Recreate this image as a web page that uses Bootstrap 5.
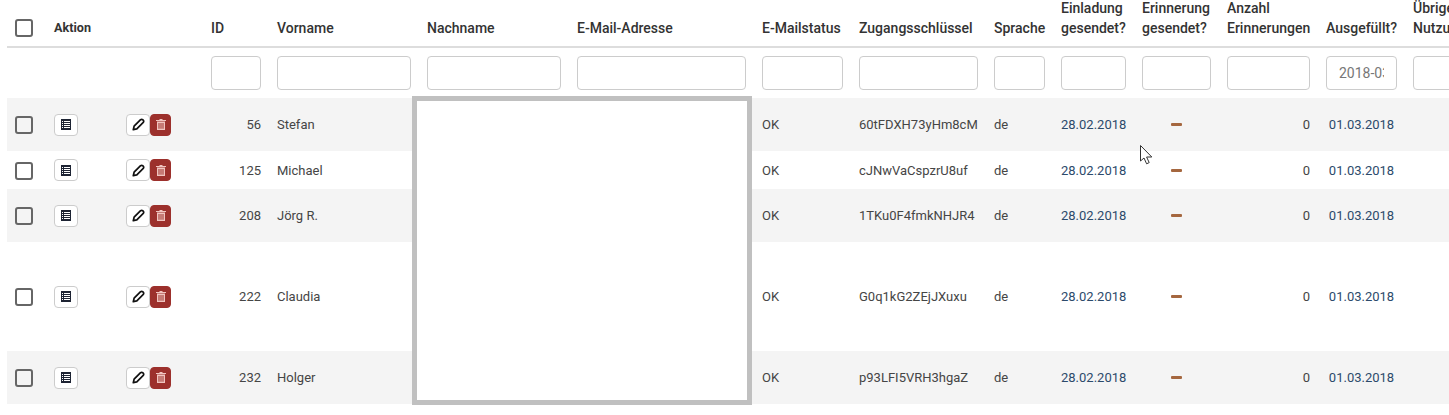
<!DOCTYPE html>
<html lang="de">

<head>
    <meta charset="UTF-8">
    <meta name="viewport" content="width=device-width, initial-scale=1.0">
    <title>Teilnehmer</title>
    <link href="https://cdn.jsdelivr.net/npm/bootstrap@5.3.0/dist/css/bootstrap.min.css" rel="stylesheet">
    <style>
        html, body {
            height: 415px;
            overflow: hidden;
        }

        body {
            font-family: Roboto, sans-serif;
            font-size: 13px;
            line-height: 20px;
            color: #454545;
            background: #fff;
        }

        .page-wrap {
            position: relative;
            width: 1449px;
            height: 415px;
            padding-left: 7px;
            overflow: hidden;
        }

        .survey-table {
            table-layout: fixed;
            width: 1498px;
            margin: -2px 0 0;
            --bs-table-striped-bg: #f4f4f4;
            --bs-table-striped-color: #454545;
            --bs-table-color: #454545;
        }

        .survey-table th,
        .survey-table td {
            padding: 8px;
            border: 0;
            vertical-align: middle;
        }

        .survey-table thead tr:first-child th {
            vertical-align: bottom;
            font-size: 14px;
            font-weight: 500;
            color: #333;
            padding-top: 0;
            padding-bottom: 8px;
            border-bottom: 2px solid #ddd;
        }

        .survey-table thead tr:first-child th.small-head {
            font-size: 12.6px;
            font-weight: 700;
        }

        .survey-table thead .tick-box {
            margin-bottom: 1px;
        }

        .filter-row td {
            height: 50px;
        }

        .filter-input {
            height: 34px;
            padding: 6px 12px;
            font-size: 14px;
            color: #777;
            border-color: #ccc;
            border-radius: 4px;
        }

        .row-a { height: 53px; }
        .row-b { height: 38px; }
        .row-c { height: 109px; }

        /* text of the short row sits a pixel lower than its buttons */
        .survey-table .row-b td:not(.action-cell) {
            padding-top: 9px;
            padding-bottom: 7px;
        }

        .tick-box {
            display: block;
            width: 18px;
            height: 18px;
            border: 2px solid #666;
            border-radius: 3px;
            background: transparent;
        }

        .action-wrap {
            display: flex;
            align-items: center;
        }

        .act-btn {
            display: inline-flex;
            align-items: center;
            justify-content: center;
            height: 22px;
            padding: 0;
            border-radius: 4px;
            border: 1px solid #ccc;
            background: #fff;
        }

        .btn-view { width: 24px; margin-right: 48px; }
        .btn-edit { width: 24px; }
        .btn-del { width: 21px; background: #9c302c; border-color: #9c302c; }

        .date-text { color: #2c4a6b; }

        .dash-mark {
            display: block;
            width: 11px;
            height: 3px;
            margin: 0 auto 1px;
            border-radius: 1px;
            background: #a5673f;
        }

        .blank-box {
            position: absolute;
            left: 412px;
            top: 96px;
            width: 340px;
            height: 309px;
            background: #fff;
            border: 5px solid #c0c0c0;
        }

        .mouse-arrow {
            position: absolute;
            left: 1140px;
            top: 145px;
        }
    </style>
</head>

<body>
    <div class="page-wrap">
        <table class="table table-striped survey-table">
            <colgroup>
                <col style="width:39px"><col style="width:157px"><col style="width:66px"><col style="width:150px">
                <col style="width:150px"><col style="width:185px"><col style="width:97px"><col style="width:135px">
                <col style="width:67px"><col style="width:81px"><col style="width:85px"><col style="width:99px">
                <col style="width:87px"><col style="width:100px">
            </colgroup>
            <thead>
                <tr>
                    <th><span class="tick-box"></span></th>
                    <th class="small-head">Aktion</th>
                    <th>ID</th>
                    <th>Vorname</th>
                    <th>Nachname</th>
                    <th>E-Mail-Adresse</th>
                    <th>E-Mailstatus</th>
                    <th>Zugangsschlüssel</th>
                    <th>Sprache</th>
                    <th>Einladung gesendet?</th>
                    <th>Erinnerung gesendet?</th>
                    <th>Anzahl Erinnerungen</th>
                    <th>Ausgefüllt?</th>
                    <th>Übrige Nutzungen</th>
                </tr>
                <tr class="filter-row" id="filter-row"></tr>
            </thead>
            <tbody id="rows"></tbody>
        </table>
        <div class="blank-box"></div>
        <svg class="mouse-arrow" width="14" height="20" viewBox="0 0 14 20">
            <path d="M.5.5V16L4 13 6.6 18.8 9.2 17.6 6.6 12H11.8Z" fill="#fff" stroke="#333" stroke-width="1"/>
        </svg>
    </div>

    <script>
        const people = [
            { id: 56, name: "Stefan", key: "60tFDXH73yHm8cM", cls: "row-a" },
            { id: 125, name: "Michael", key: "cJNwVaCspzrU8uf", cls: "row-b" },
            { id: 208, name: "Jörg R.", key: "1TKu0F4fmkNHJR4", cls: "row-a" },
            { id: 222, name: "Claudia", key: "G0q1kG2ZEjJXuxu", cls: "row-c" },
            { id: 232, name: "Holger", key: "p93LFI5VRH3hgaZ", cls: "row-a" },
        ];

        const listIcon = `<svg width="10" height="11" viewBox="0 0 10 11"><path fill-rule="evenodd" fill="#1d2333" d="M0 0H10V11H0ZM1 2V3H2V2ZM3 2V3H9V2ZM1 4V5H2V4ZM3 4V5H9V4ZM1 6V7H2V6ZM3 6V7H9V6ZM1 8V9H2V8ZM3 8V9H9V8Z"/></svg>`;
        const penIcon = `<svg width="13" height="13" viewBox="0 0 13 13"><path fill="none" stroke="#111" stroke-width="1.7" stroke-linejoin="round" d="M1.3 11.7 2.1 8.2 8.6 1.7Q9.7.9 10.7 1.7L11.3 2.3Q12.1 3.3 11.3 4.4L4.8 10.9Z"/></svg>`;
        const binIcon = `<svg width="10" height="11" viewBox="0 0 10 11"><path fill="#f0c4bf" fill-rule="evenodd" d="M3.5 0H6.5V1H10V2H0V1H3.5ZM1 2.6H9V11H1ZM2.5 4V9.8H3.5V4ZM4.5 4V9.8H5.5V4ZM6.5 4V9.8H7.5V4Z"/></svg>`;

        // filter inputs, only Ausgefuellt has a value
        const filterRow = document.getElementById("filter-row");
        for (let i = 0; i < 14; i++) {
            const td = document.createElement("td");
            if (i > 1) {
                const value = i === 12 ? "2018-03-01" : "";
                td.innerHTML = `<input type="text" class="form-control filter-input" value="${value}">`;
            }
            filterRow.appendChild(td);
        }

        const tbody = document.getElementById("rows");
        people.forEach((p) => {
            const tr = document.createElement("tr");
            tr.className = p.cls;
            tr.innerHTML = `
                <td><span class="tick-box"></span></td>
                <td class="action-cell"><div class="action-wrap">
                    <button class="btn act-btn btn-view">${listIcon}</button>
                    <button class="btn act-btn btn-edit">${penIcon}</button>
                    <button class="btn act-btn btn-del">${binIcon}</button>
                </div></td>
                <td class="text-end">${p.id}</td>
                <td>${p.name}</td>
                <td></td>
                <td></td>
                <td>OK</td>
                <td>${p.key}</td>
                <td>de</td>
                <td><span class="date-text">28.02.2018</span></td>
                <td><span class="dash-mark"></span></td>
                <td class="text-end">0</td>
                <td class="text-center"><span class="date-text">01.03.2018</span></td>
                <td></td>
            `;
            tbody.appendChild(tr);
        });
    </script>

    <script src="https://cdn.jsdelivr.net/npm/bootstrap@5.3.0/dist/js/bootstrap.bundle.min.js"></script>
</body>

</html>
